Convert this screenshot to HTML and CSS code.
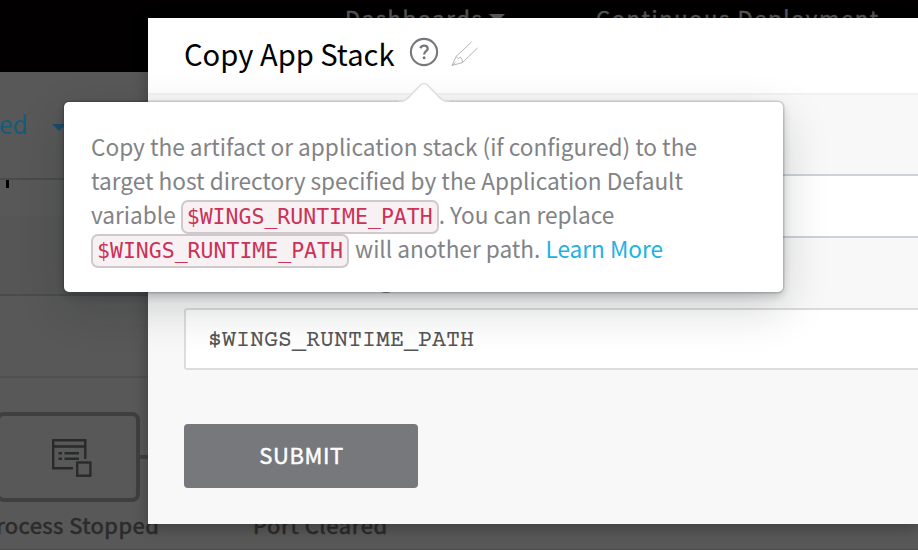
FILE: index.html
```html
<!DOCTYPE html>
<html lang="en">
<head>
<meta charset="utf-8">
<title>Copy App Stack</title>
<link rel="stylesheet" href="styles.css">
</head>
<body>
<div class="page">
  <nav class="topbar">
    <span class="nav-item">Dashboards<i class="nav-caret"></i></span>
    <span class="nav-item nav-second">Continuous Deployment</span>
  </nav>
  <div class="filter"><span>ed</span><i class="blue-caret"></i></div>
  <div class="strip"><i class="mark"></i></div>
  <div class="strip-low"></div>
  <div class="pipeline">
    <div class="stage-row">
      <div class="stage">
        <svg width="41" height="40" viewBox="0 0 41 40" fill="none" stroke="#292a2b" stroke-width="2.4">
          <path d="M22 30.300H2.200V2.200H34.300V21M2 8.500H34M13.500 15.200H28M13.500 20.800H28"/>
          <path d="M7.500 15.200H11M7.500 20.800H11"/>
          <rect x="26.200" y="24.500" width="13.200" height="13.200"/>
        </svg>
      </div>
      <i class="connector"></i>
    </div>
    <div class="stage-names"><span class="name-a">rocess Stopped</span><span class="name-b">Port Cleared</span></div>
  </div>
</div>

<section class="modal">
  <header class="modal-head">
    <h1>Copy App Stack</h1>
    <svg class="help" width="30" height="30" viewBox="0 0 30 30" fill="none" stroke="#77787b">
      <circle cx="15" cy="15" r="13.100" stroke-width="2.100"/>
      <path d="M11.300 11.200C12.100 9.300 13.500 8.600 15.100 8.600C17.300 8.600 18.700 9.800 18.700 11.700C18.700 14.200 15.100 14.300 15.100 17.500" stroke-width="2.300"/>
      <circle cx="15.100" cy="20.700" r="1.500" fill="#77787b" stroke="none"/>
    </svg>
    <svg class="pencil" width="28" height="26" viewBox="0 0 28 26" fill="none" stroke="#b5b5b5" stroke-width="1">
      <path d="M20.500 1L5 15.500L1 24.500L11.500 21.500L26.500 7M5 15.500L7.500 17.500L9.500 16L11 18.500L11.500 21.500M1 24.500L4.500 21.500"/>
    </svg>
  </header>
  <div class="modal-body">
    <div class="field field-top"></div>
    <div class="label-row"><i></i></div>
    <div class="field field-path">$WINGS_RUNTIME_PATH</div>
    <button class="submit">SUBMIT</button>
  </div>
</section>

<aside class="tip">
  <svg class="arrow" width="50" height="22" viewBox="0 0 50 22">
    <path d="M0 20C6 20 8 17 11 14L20.500 4C23.500 .8 26.500 .8 29.500 4L39 14C42 17 44 20 50 20V22H0Z" fill="#fff"/>
    <path d="M0 19.500C6 19.500 8 17 11 14L20.500 4C23.500 .8 26.500 .8 29.500 4L39 14C42 17 44 19.500 50 19.500" fill="none" stroke="#dcdddd" stroke-width="1.500"/>
  </svg>
  <div class="line"><span>Copy the artifact or application stack (if configured) to the</span></div>
  <div class="line"><span>target host directory specified by the Application Default</span></div>
  <div class="line"><span>variable</span><code class="after-word">$WINGS_RUNTIME_PATH</code><span>. You can replace</span></div>
  <div class="line"><code>$WINGS_RUNTIME_PATH</code><span class="rest">will another path. <a>Learn More</a></span></div>
</aside>
</body>
</html>
```
FILE: styles.css
```css
* { box-sizing: border-box; }
body {
  margin: 0;
  width: 918px;
  height: 550px;
  overflow: hidden;
  position: relative;
  background: #585858;
  font-family: "Noto Sans CJK SC", "Open Sans", sans-serif;
}
i { display: block; }
.page { height: 550px; overflow: hidden; border-bottom: 1px solid #4b4b4b; }
.topbar {
  height: 72px;
  background: #020001;
  color: #565656;
  display: flex;
  padding: 1px 0 0 345px;
  font-size: 22px;
  line-height: 32px;
  -webkit-text-stroke: .5px;
  letter-spacing: 1.600px;
  white-space: nowrap;
}
.nav-item { display: flex; width: 251px; }
.nav-caret { margin: 13px 0 0 6px; border: 8px solid transparent; border-top-color: #5a5a5a; border-bottom: 0; height: 8px; }
.filter {
  height: 108px;
  border-bottom: 2px solid #4a4a4b;
  display: flex;
  color: #165b78;
  font-size: 24.500px;
  line-height: 34px;
  padding-top: 35px;
}
.filter span { width: 53px; margin-left: -1px; }
.blue-caret { margin-top: 17px; height: 7px; border: 7px solid transparent; border-top-color: #174f68; border-bottom: 0; }
.strip { height: 36px; }
.mark { width: 3px; height: 8px; margin-left: 6px; background: #000; }
.strip-low { height: 80px; border-bottom: 2px solid #4b4b4b; background: #565656; }
.pipeline { margin-top: 80px; border-top: 2px solid #505050; padding-top: 34px; }
.stage-row { display: flex; align-items: center; }
.stage {
  width: 144px;
  height: 90px;
  margin-left: -4px;
  border: 4px solid #3f3f3f;
  border-radius: 8px;
  display: flex;
  padding: 22px 0 0 51px;
}
.connector { width: 9px; height: 4px; background: #414141; }
.stage-names { display: flex; margin-left: -4px; color: #2b2b2b; font-size: 22px; -webkit-text-stroke: .6px; line-height: 32px; padding-top: 6px; white-space: nowrap; letter-spacing: .650px; }
.name-a { width: 257px; letter-spacing: .450px; }
.modal {
  position: absolute;
  left: 148px;
  top: 18px;
  width: 770px;
  height: 506px;
  background: #f8f8f8;
  box-shadow: 0 4px 14px rgba(0, 0, 0, .3);
}
.modal-head { height: 77px; background: #fff; border-bottom: 2px solid #f2f2f2; padding-left: 36px; display: flex; }
h1 { margin: 15px 0 0; width: 225px; font-size: 29.150px; line-height: 40px; font-weight: 400; color: #000; white-space: nowrap; }
.help { margin-top: 19px; }
.pencil { margin: 23px 0 0 12px; }
.modal-body { padding: 79px 0 0 36px; }
.field { height: 64px; background: #fff; border: 2px solid #cdd2d8; border-right: 0; }
.label-row { height: 70px; padding: 50px 0 0 196px; }
.label-row i { width: 12px; height: 5px; border-radius: 50%; background: #858585; }
.field-path {
  height: 62px;
  border-color: #dcdcdc;
  border-radius: 3px 0 0 3px;
  padding: 1px 0 0 22px;
  font: 23.350px/60px "Courier Prime", "Liberation Mono", monospace;
  color: #555;
}
.submit {
  display: block;
  margin-top: 54px;
  width: 234px;
  height: 64px;
  padding: 0 0 4px 1px;
  border: 0;
  border-radius: 4px;
  background: #77787c;
  color: #fff;
  font: 22px/60px "Noto Sans CJK SC", sans-serif;
  -webkit-text-stroke: .5px;
  letter-spacing: .6px;
}
.tip {
  position: absolute;
  left: 64px;
  top: 102px;
  width: 719px;
  height: 190px;
  padding: 28px 0 0 27px;
  background: #fff;
  border-radius: 5px;
  color: #828386;
  font-size: 22.630px;
  box-shadow: 0 0 0 1.500px rgba(16, 22, 26, .15), 0 4px 8px rgba(16, 22, 26, .2), 0 16px 46px rgba(16, 22, 26, .18);
}
.arrow { position: absolute; left: 335px; top: -20px; }
.line { height: 34px; line-height: 34px; display: flex; white-space: pre; }
code {
  height: 34px;
  width: 258px;
  margin-top: 2px;
  padding: 0 4px;
  border: 2px solid #cfc9cc;
  border-radius: 7px;
  background: #f8f1f3;
  color: #cc3158;
  font: 21.500px/29px "DejaVu Sans Mono", monospace;
}
.after-word { margin-left: 5px; }
.rest { margin-left: 6px; }
.tip a { color: #23b0e3; }
```
